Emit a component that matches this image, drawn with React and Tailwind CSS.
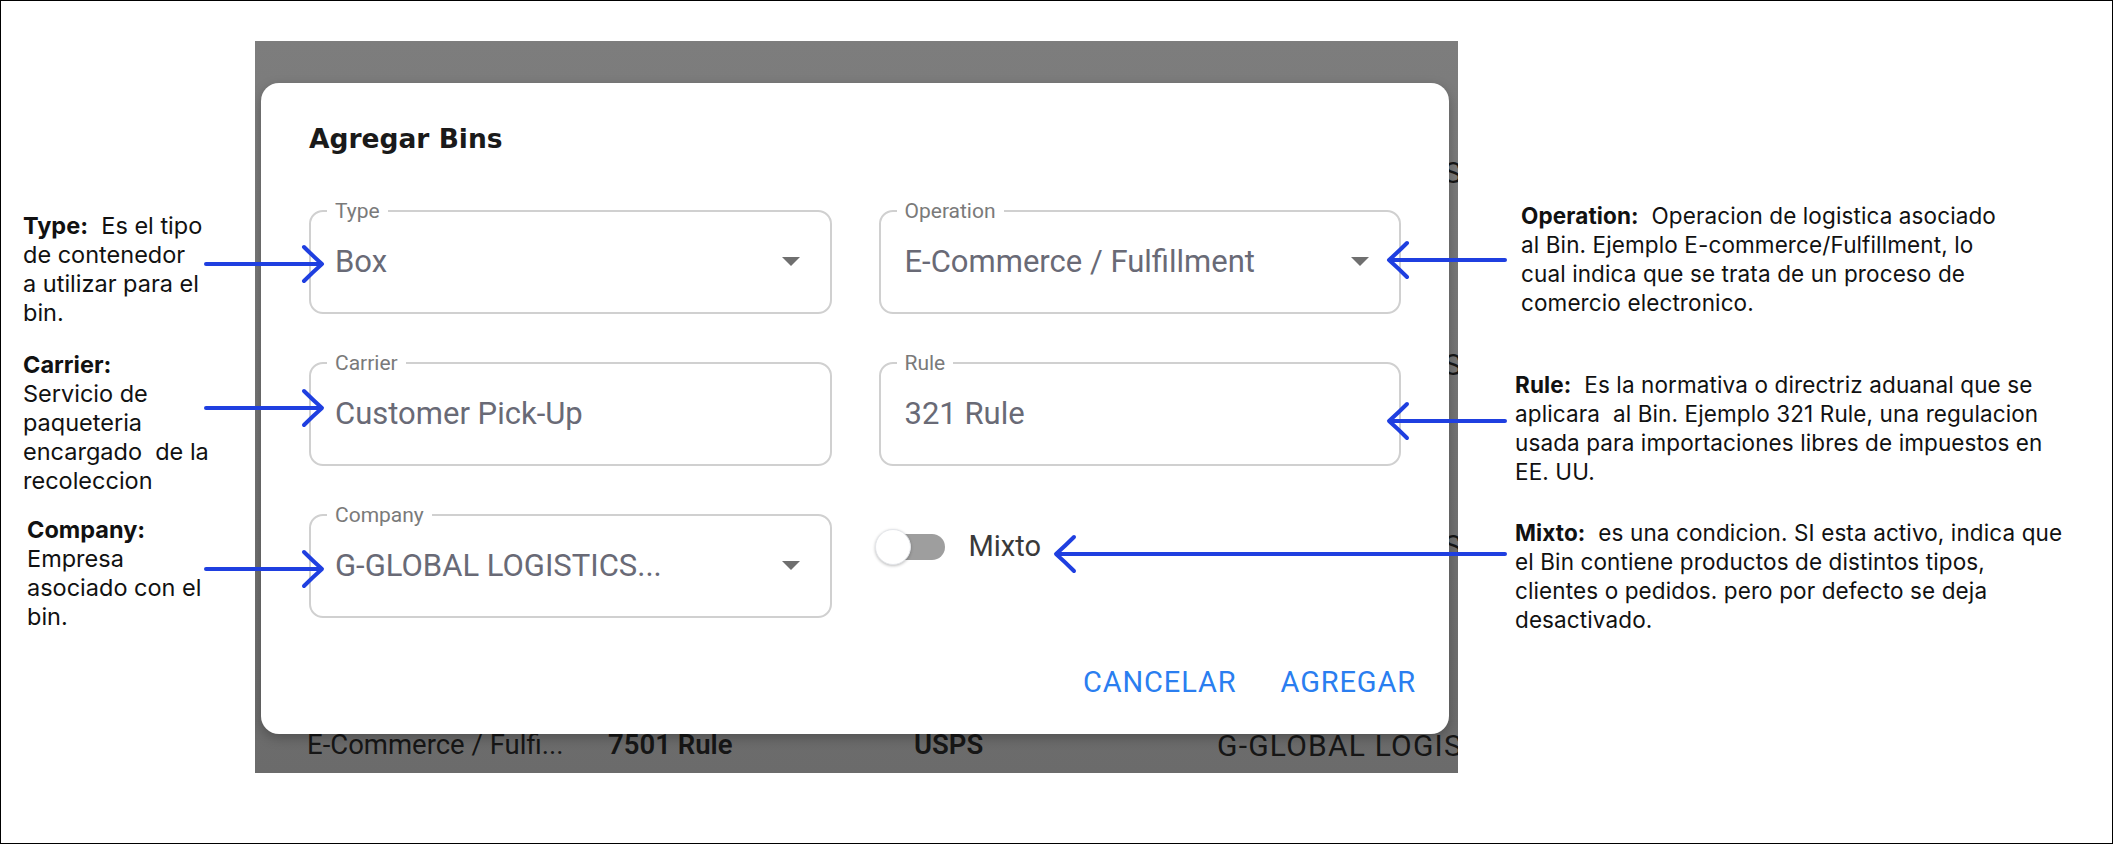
import React from 'react';

// annotation line helper: keeps the exact wrapping of the reference
function Lines({ lines }) {
  return (
    <div className="whitespace-pre leading-[29px]">
      {lines.map((l, i) => (
        <div key={i}>{l}</div>
      ))}
    </div>
  );
}

function DropArrow() {
  return (
    <svg width="18" height="10" viewBox="0 0 18 10" className="shrink-0">
      <path d="M0 0 L18 0 L9 9 Z" fill="#6f6f6f" />
    </svg>
  );
}

function Field({ label, value, select }) {
  return (
    <div className="relative h-[104px] rounded-[14px] border-2 border-[#d0d0d0] flex items-center pl-[24px] pr-[30px]">
      <span className="absolute -top-[14px] left-[16px] bg-white px-[8px] text-[21px] leading-[26px] text-[#7a7a7a]">
        {label}
      </span>
      <span className="flex-1 truncate text-[31px] leading-[40px] text-[#696a76]">{value}</span>
      {select && <DropArrow />}
    </div>
  );
}

function Toggle() {
  return (
    <div className="relative w-[70px] h-[42px] shrink-0">
      <div className="absolute left-[10px] right-0 top-[8px] h-[26px] rounded-full bg-[#9e9e9e]" />
      <div className="absolute left-0 top-[3px] w-[36px] h-[36px] rounded-full bg-white border border-[#e4e6ea] shadow-[0_1px_3px_rgba(0,0,0,0.25)]" />
    </div>
  );
}

// rows of the table under the dialog; only the last one is fully visible
function TableRow({ cells, className }) {
  return (
    <div className={`flex items-center h-[40px] pl-[52px] text-[27.5px] text-[#161616] whitespace-nowrap ${className}`}>
      <div className="w-[301px] shrink-0">{cells[0]}</div>
      <div className="w-[306px] shrink-0 font-semibold">{cells[1]}</div>
      <div className="w-[303px] shrink-0 font-semibold">{cells[2]}</div>
      <div className="w-[241px] shrink-0 overflow-hidden text-[30px] tracking-[0.04em]">{cells[3]}</div>
    </div>
  );
}

function Arrows() {
  const blue = '#1f3fe0';
  const left = [263, 407, 568];
  const right = [
    { y: 259, tip: 1388 },
    { y: 420, tip: 1388 },
    { y: 553, tip: 1055 },
  ];
  return (
    <svg className="absolute inset-0 pointer-events-none" width="2113" height="844">
      {left.map((y) => (
        <g key={y} fill="none" stroke={blue} strokeWidth="4" strokeLinecap="round" strokeLinejoin="round">
          <line x1="205" y1={y} x2="320" y2={y} />
          <path d={`M303 ${y - 17} Q312 ${y - 8} 321 ${y} Q312 ${y + 8} 303 ${y + 17}`} />
        </g>
      ))}
      {right.map((a) => (
        <g key={a.y} fill="none" stroke={blue} strokeWidth="4" strokeLinecap="round" strokeLinejoin="round">
          <line x1={a.tip + 1} y1={a.y} x2="1504" y2={a.y} />
          <path d={`M${a.tip + 18} ${a.y - 17} Q${a.tip + 9} ${a.y - 8} ${a.tip} ${a.y} Q${a.tip + 9} ${a.y + 8} ${a.tip + 18} ${a.y + 17}`} />
        </g>
      ))}
    </svg>
  );
}

export default function App() {
  return (
    <div className="relative w-[2113px] h-[844px] bg-white border border-black flex font-['Inter',sans-serif] text-[#111]">
      {/* Left notes */}
      <div className="w-[254px] shrink-0 pl-[22px] pt-[210px] text-[23.5px]">
        <Lines lines={[<><b>Type:</b>  Es el tipo</>, 'de contenedor', 'a utilizar para el', 'bin.']} />
        <div className="mt-[23px]">
          <Lines lines={[<b>Carrier:</b>, 'Servicio de', 'paqueteria', 'encargado  de la', 'recoleccion']} />
        </div>
        <div className="mt-[20px] pl-[4px]">
          <Lines lines={[<b>Company:</b>, 'Empresa', 'asociado con el', 'bin.']} />
        </div>
      </div>

      {/* Screenshot of the dialog */}
      <div className="relative mt-[40px] w-[1203px] h-[732px] shrink-0 overflow-hidden bg-linear-to-b from-[#7d7d7d] to-[#6b6b6b] font-['Roboto',sans-serif]">
        <div className="flex flex-col">
          <TableRow className="mt-[111px]" cells={['', '', '', 'G-GLOBAL LOGISTICS']} />
          <TableRow className="mt-[152px]" cells={['', '', '', 'G-GLOBAL LOGISTICS']} />
          <TableRow className="mt-[141px]" cells={['', '', '', 'G-GLOBAL LOGISTICS']} />
          <TableRow className="mt-[160px]" cells={['E-Commerce / Fulfi...', '7501 Rule', 'USPS', 'G-GLOBAL LOGISTICS']} />
        </div>

        <div className="absolute left-[6px] top-[42px] w-[1188px] h-[651px] bg-white rounded-[18px] shadow-[0_4px_12px_rgba(0,0,0,0.25)] px-[48px] pt-[40px] flex flex-col">
          <h2 className="font-['DejaVu_Sans',sans-serif] font-bold text-[26.5px] leading-[32px] text-[#1a1a1a]">Agregar Bins</h2>

          <div className="mt-[55px] grid grid-cols-2 gap-x-[47px] gap-y-[48px]">
            <Field label="Type" value="Box" select />
            <Field label="Operation" value="E-Commerce / Fulfillment" select />
            <Field label="Carrier" value="Customer Pick-Up" />
            <Field label="Rule" value="321 Rule" />
            <Field label="Company" value="G-GLOBAL LOGISTICS..." select />
            <div className="flex items-center gap-[24px] h-[42px] mt-[12px] -ml-[4px]">
              <Toggle />
              <span className="text-[29px] text-[#3a3a3a]">Mixto</span>
            </div>
          </div>

          <div className="mt-[46px] -mr-[15px] flex justify-end gap-[44px] text-[29px] leading-[36px] font-normal tracking-[0.03em] text-[#2a7ef0]">
            <button>CANCELAR</button>
            <button>AGREGAR</button>
          </div>
        </div>
      </div>

      {/* Right notes */}
      <div className="flex-1 pl-[57px] pt-[200px] text-[22.5px] tracking-[0.005em]">
        <div className="pl-[6px]">
          <Lines
            lines={[
              <><b>Operation:</b>  Operacion de logistica asociado</>,
              'al Bin. Ejemplo E-commerce/Fulfillment, lo',
              'cual indica que se trata de un proceso de',
              'comercio electronico.',
            ]}
          />
        </div>
        <div className="mt-[53px]">
          <Lines
            lines={[
              <><b>Rule:</b>  Es la normativa o directriz aduanal que se</>,
              'aplicara  al Bin. Ejemplo 321 Rule, una regulacion',
              'usada para importaciones libres de impuestos en',
              'EE. UU.',
            ]}
          />
        </div>
        <div className="mt-[32px]">
          <Lines
            lines={[
              <><b>Mixto:</b>  es una condicion. SI esta activo, indica que</>,
              'el Bin contiene productos de distintos tipos,',
              'clientes o pedidos. pero por defecto se deja',
              'desactivado.',
            ]}
          />
        </div>
      </div>

      <Arrows />
    </div>
  );
}
